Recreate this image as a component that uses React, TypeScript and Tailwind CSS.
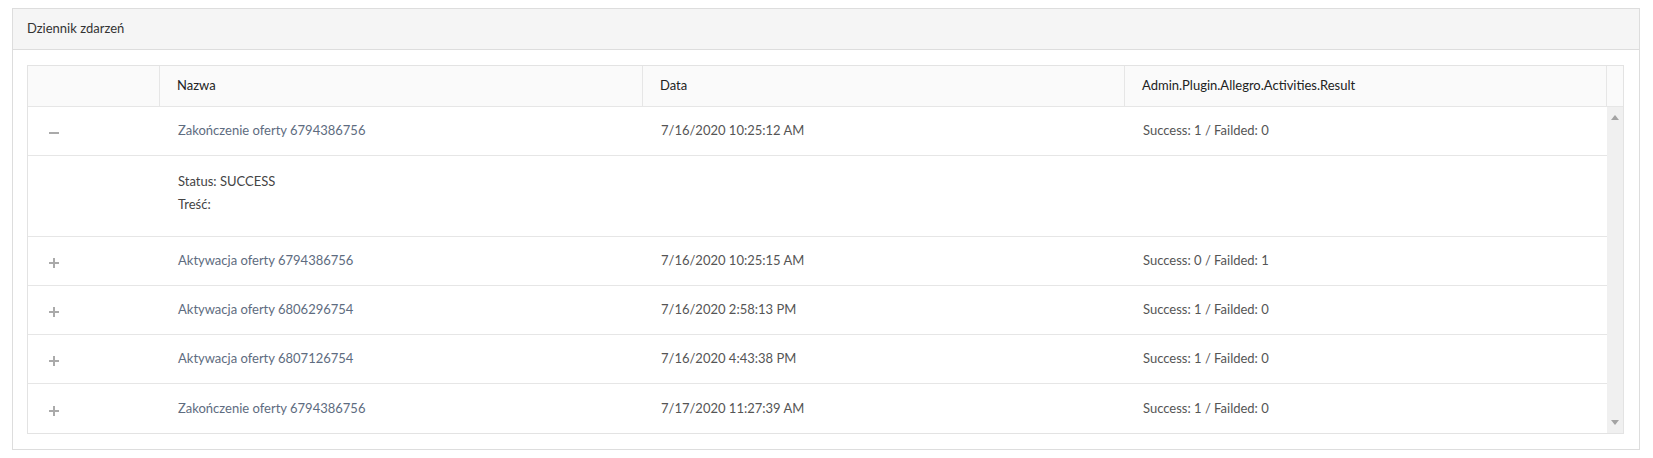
import * as React from 'react';

type Activity = {
  name: string;
  date: string;
  result: string;
  expanded?: boolean;
  status?: string;
};

const activities: Activity[] = [
  {
    name: 'Zakończenie oferty 6794386756',
    date: '7/16/2020 10:25:12 AM',
    result: 'Success: 1 / Failded: 0',
    expanded: true,
    status: 'SUCCESS',
  },
  { name: 'Aktywacja oferty 6794386756', date: '7/16/2020 10:25:15 AM', result: 'Success: 0 / Failded: 1' },
  { name: 'Aktywacja oferty 6806296754', date: '7/16/2020 2:58:13 PM', result: 'Success: 1 / Failded: 0' },
  { name: 'Aktywacja oferty 6807126754', date: '7/16/2020 4:43:38 PM', result: 'Success: 1 / Failded: 0' },
  { name: 'Zakończenie oferty 6794386756', date: '7/17/2020 11:27:39 AM', result: 'Success: 1 / Failded: 0' },
];

function ToggleIcon({ open }: { open: boolean }) {
  return (
    <svg width="10" height="10" viewBox="0 0 10 10" aria-hidden className="mt-[4px]">
      <rect x="0" y="4" width="10" height="2" fill="#aaaaaa" />
      {!open && <rect x="4" y="0" width="2" height="10" fill="#aaaaaa" />}
    </svg>
  );
}

function HeaderCell({ label, className }: { label?: string; className: string }) {
  return (
    <div className={`flex items-center border-r border-[#e6e6e6] pl-[17px] text-[#222] ${className}`}>
      {label}
    </div>
  );
}

export default function App() {
  return (
    <div
      className="bg-white pt-2 pl-3 pr-[13px] pb-[9px] text-[13px]"
      style={{ fontFamily: 'Lato, "Noto Sans", sans-serif' }}
    >
      <div className="border border-[#dddddd] bg-white">
        {/* Nagłówek panelu */}
        <div className="flex h-[41px] items-center border-b border-[#dddddd] bg-[#f5f5f5] px-[14px] text-[#333]">
          Dziennik zdarzeń
        </div>

        <div className="pt-[15px] pr-[15px] pb-[15px] pl-[14px]">
          <div className="border border-[#e3e3e3]">
            {/* Nagłówek tabeli */}
            <div className="flex h-[41px] border-b border-[#e6e6e6] bg-[#fafafa]">
              <HeaderCell className="w-[132px]" />
              <HeaderCell label="Nazwa" className="w-[483px]" />
              <HeaderCell label="Data" className="w-[482px]" />
              <HeaderCell label="Admin.Plugin.Allegro.Activities.Result" className="w-[482px]" />
              <div className="flex-1" />
            </div>

            <div className="flex">
              <div className="w-[1579px]">
                {activities.map((a, i) => (
                  <React.Fragment key={i}>
                    <div
                      className={`flex h-[49px] items-center ${
                        i < activities.length - 1 ? 'border-b border-[#e6e6e6]' : ''
                      }`}
                    >
                      <div className="flex w-[132px] items-center pl-[21px]">
                        <ToggleIcon open={!!a.expanded} />
                      </div>
                      <div className="w-[483px] pl-[18px] text-[#5e6c80]">{a.name}</div>
                      <div className="w-[482px] pl-[18px] text-[#555]">{a.date}</div>
                      <div className="w-[482px] pl-[18px] text-[#555]">{a.result}</div>
                    </div>
                    {a.expanded && (
                      <div className="flex h-[81px] border-b border-[#e6e6e6] pt-[14px]">
                        <div className="w-[132px]" />
                        <div className="pl-[18px] leading-[23px] text-[#444]">
                          <div>Status: {a.status}</div>
                          <div>Treść:</div>
                        </div>
                      </div>
                    )}
                  </React.Fragment>
                ))}
              </div>

              {/* Pasek przewijania */}
              <div className="flex flex-1 flex-col items-center justify-between bg-[#f0f0f0] pt-[8px] pb-[8px]">
                <svg width="8" height="5" viewBox="0 0 8 5" aria-hidden>
                  <path d="M0 5 L4 0 L8 5 Z" fill="#a3a3a3" />
                </svg>
                <svg width="8" height="5" viewBox="0 0 8 5" aria-hidden>
                  <path d="M0 0 L8 0 L4 5 Z" fill="#a3a3a3" />
                </svg>
              </div>
            </div>
          </div>
        </div>
      </div>
    </div>
  );
}
